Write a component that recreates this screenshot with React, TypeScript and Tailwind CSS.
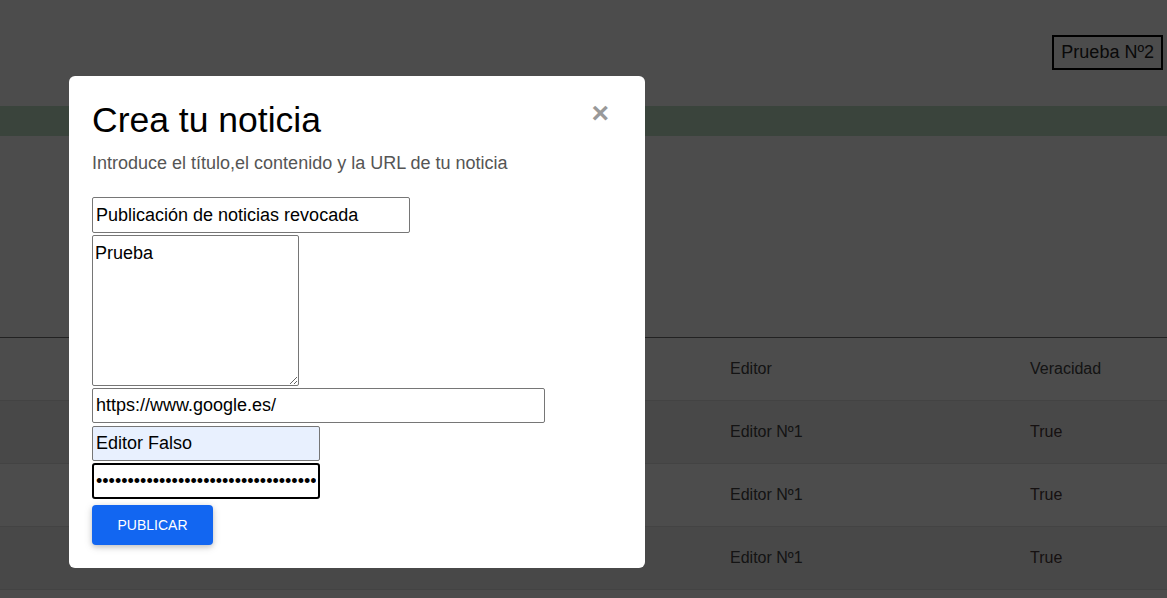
import React from "react";

const rows = [
  { editor: "Editor Nº1", ver: "True", bg: "bg-[#f2f2f2]" },
  { editor: "Editor Nº1", ver: "True", bg: "bg-white" },
  { editor: "Editor Nº1", ver: "True", bg: "bg-[#f2f2f2]" },
];

export default function App() {
  return (
    <div
      className="relative h-[598px] w-full overflow-hidden bg-white"
      style={{ fontFamily: '"Liberation Sans", Arial, sans-serif' }}
    >
      {/* underlying page */}
      <div className="flex h-[106px] items-start justify-end pr-[4px] pt-[35px]">
        <div className="flex h-[35px] items-center border-2 border-black px-[7px] text-[18px] text-[#222]">
          Prueba Nº2
        </div>
      </div>
      <div className="h-[30px] bg-[#c1e3c8]" />
      <div className="h-[201px]" />
      <div className="border-t border-[#737373]">
        <div className="grid h-[63px] grid-cols-[730px_300px_1fr] items-center border-b border-[#e0e0e0] text-[16px] text-[#444]">
          <div />
          <div>Editor</div>
          <div>Veracidad</div>
        </div>
        {rows.map((r, i) => (
          <div
            key={i}
            className={`grid h-[63px] grid-cols-[730px_300px_1fr] items-center border-b border-[#e0e0e0] text-[16px] text-[#444] ${r.bg}`}
          >
            <div />
            <div>{r.editor}</div>
            <div className="text-[#4a3a3a]">{r.ver}</div>
          </div>
        ))}
      </div>

      {/* modal overlay */}
      <div className="absolute inset-0 bg-black/70 pl-[69px] pt-[76px]">
        <div className="relative flex w-[576px] flex-col rounded-[6px] bg-white px-[23px] pb-[23px] pt-[23px]">
          <div className="absolute right-[36px] top-[22px] text-[30px] font-bold leading-none text-[#999]">
            ×
          </div>
          <h2 className="text-[35.5px] leading-[43px] text-black">Crea tu noticia</h2>
          <p className="mt-[10px] text-[18px] leading-[22px] text-[#555]">
            Introduce el título,el contenido y la URL de tu noticia
          </p>
          <div className="mt-[23px] flex flex-col items-start gap-[2px]">
            <input
              readOnly
              defaultValue="Publicación de noticias revocada"
              className="h-[36px] w-[318px] rounded-[2px] border border-[#767676] px-[3px] text-[18px] text-black outline-none"
            />
            <textarea
              readOnly
              defaultValue="Prueba"
              className="h-[151px] w-[207px] rounded-[2px] border border-[#767676] px-[2px] pt-[6px] text-[18px] leading-[22px] text-black outline-none"
            />
            <input
              readOnly
              defaultValue="https://www.google.es/"
              className="h-[35px] w-[453px] rounded-[2px] border border-[#767676] px-[3px] text-[18px] text-black outline-none"
            />
            <input
              readOnly
              defaultValue="Editor Falso"
              className="mt-[1px] h-[35px] w-[228px] rounded-[2px] border border-[#767676] bg-[#e8f0fe] px-[3px] text-[18px] text-black outline-none"
            />
            <input
              readOnly
              type="password"
              defaultValue="abcdefghijklmnopqrstuvwxyzabcdefghijk"
              className="h-[36px] w-[228px] rounded-[3px] border-2 border-black px-[2px] text-[18px] text-black outline-none"
            />
            <button className="mt-[4px] h-[40px] w-[121px] rounded-[4px] bg-[#1266f1] text-[14px] uppercase text-white shadow-[0_2px_5px_0_rgba(0,0,0,0.16),0_2px_10px_0_rgba(0,0,0,0.12)]">
              Publicar
            </button>
          </div>
        </div>
      </div>
    </div>
  );
}
